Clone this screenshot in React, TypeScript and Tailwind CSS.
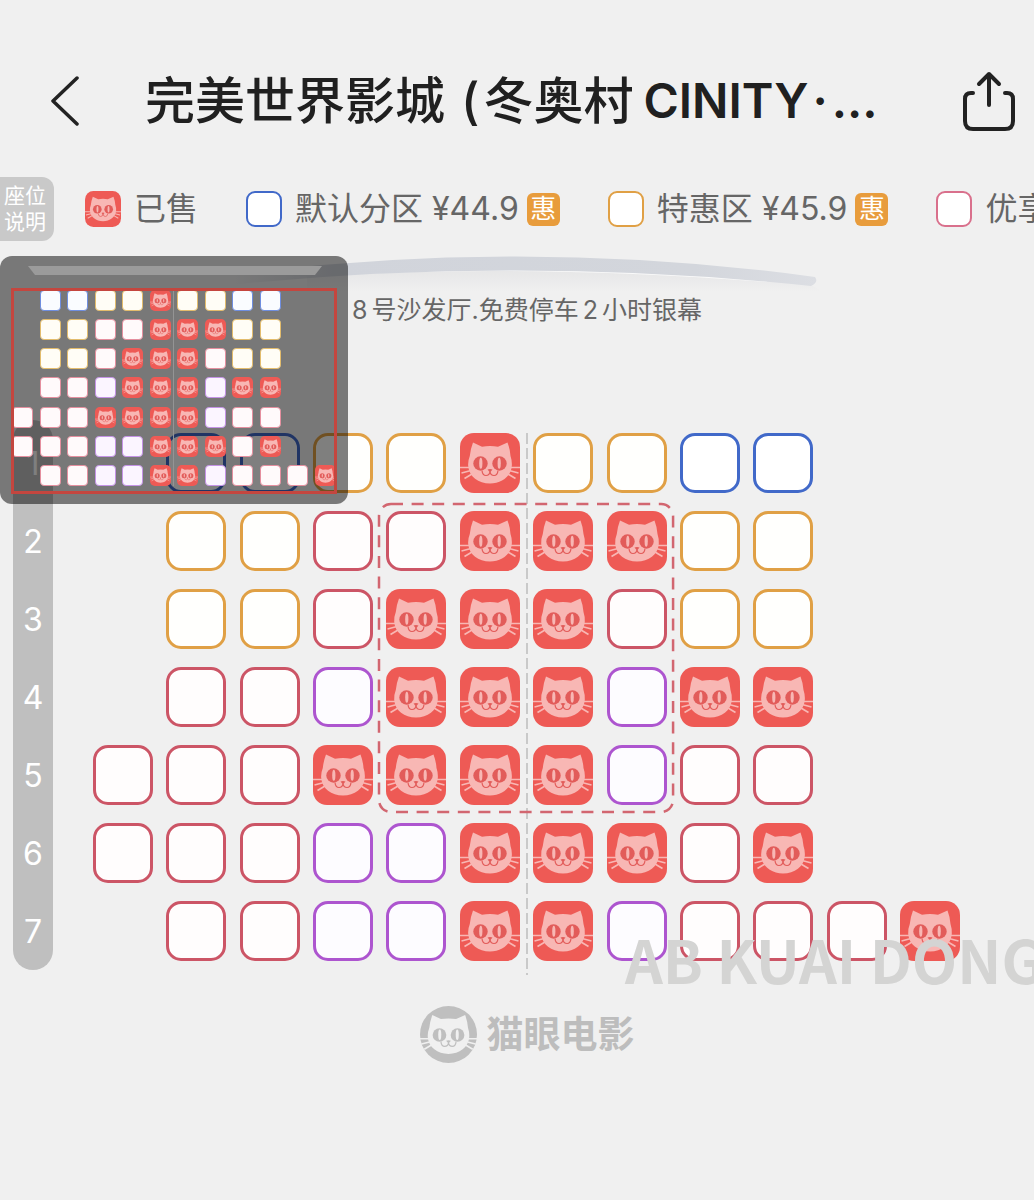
import type { ReactNode } from 'react';

type Kind = 'b' | 'o' | 'r' | 'p' | 'x';

// one string per row: b/o/r/p are price zones, x is sold, . is an empty spot
const ROWS = [
  '.bbooxoobb..',
  '.oorrxxxoo..',
  '.oorxxxroo..',
  '.rrpxxxpxx..',
  'rrrxxxxprr..',
  'rrrppxxxrx..',
  '.rrppxxprrrx',
];

const SEAT_STYLES: Record<Kind, string> = {
  b: 'border-[#4169c9] bg-white',
  o: 'border-[#e0a045] bg-[#fffffd]',
  r: 'border-[#cc5566] bg-[#fffdfd]',
  p: 'border-[#ad55cf] bg-[#fdfcff]',
  x: 'border-transparent',
};

const MINI_STYLES: Record<Kind, string> = {
  b: 'border-[#6f8ee0] bg-[#fafcff]',
  o: 'border-[#e3bc6c] bg-[#fffdf6]',
  r: 'border-[#e58f9f] bg-[#fffafb]',
  p: 'border-[#c493e6] bg-[#fbf5ff]',
  x: 'border-transparent',
};

const COLS = [
  'col-start-1',
  'col-start-2',
  'col-start-3',
  'col-start-4',
  'col-start-5',
  'col-start-6',
  'col-start-7',
  'col-start-8',
  'col-start-9',
  'col-start-10',
  'col-start-11',
  'col-start-12',
];

const LINES = [
  'row-start-1',
  'row-start-2',
  'row-start-3',
  'row-start-4',
  'row-start-5',
  'row-start-6',
  'row-start-7',
];

const SEATS = ROWS.flatMap((row, r) =>
  row
    .split('')
    .map((kind, c) => ({ kind, r, c }))
    .filter((seat) => seat.kind !== '.'),
) as { kind: Kind; r: number; c: number }[];

interface CatFaceProps {
  face: string;
  eye: string;
}

function CatFace({ face, eye }: CatFaceProps) {
  return (
    <>
      <path
        d="M13 9.5 L22 13.8 Q30 12.4 38 13.8 L47.5 9.5 Q50 16 50.5 23 Q52.2 28 51.8 33 C51 43.5 41.5 50.5 30 50.5 C18.5 50.5 9 43.5 8.2 33 Q7.8 28 9.8 23 Q10.5 16 13 9.5 Z"
        fill={face}
      />
      <g stroke={face} strokeWidth="1.7" fill="none">
        <path d="M0 34.5 H10 M1.5 40 L10 37.8 M4.5 45.5 L12 41 M60 34.5 H50 M58.5 40 L50 37.8 M55.5 45.5 L48 41" />
      </g>
      <circle cx="20.5" cy="30.5" r="7.2" fill={eye} />
      <circle cx="39.5" cy="30.5" r="7.2" fill={eye} />
      <ellipse cx="20.8" cy="30.3" rx="1.6" ry="5.5" fill={face} />
      <ellipse cx="39.2" cy="30.3" rx="1.6" ry="5.5" fill={face} />
      <path d="M27.5 36.5 Q30 35.5 32.5 36.5 L30 39.5 Z" fill={eye} />
      <path
        d="M22 37.5 Q22.5 42.5 26 42.5 Q29.5 42.5 30 38.5 Q30.5 42.5 34 42.5 Q37.5 42.5 38 37.5"
        fill="none"
        stroke={eye}
        strokeWidth="1.2"
      />
    </>
  );
}

function SoldIcon({ className }: { className: string }) {
  return (
    <svg viewBox="0 0 60 60" className={className} aria-hidden="true">
      <rect width="60" height="60" rx="14" fill="#ee5a55" />
      <CatFace face="#f8b7b4" eye="#e25c5a" />
    </svg>
  );
}

interface LegendItemProps {
  icon: ReactNode;
  discount?: boolean;
  children: ReactNode;
}

function LegendItem({ icon, discount, children }: LegendItemProps) {
  return (
    <li className="flex shrink-0 items-center">
      {icon}
      <span className="ml-[13px] text-[32px] leading-9 text-[#666]">{children}</span>
      {discount && (
        <span className="ml-2 flex size-[33px] items-center justify-center rounded-md bg-[#e89c3c] text-[26px] leading-8 text-white">
          惠
        </span>
      )}
    </li>
  );
}

function Header() {
  return (
    <header className="flex items-center px-[18px] pt-[66px]">
      <button type="button" aria-label="返回" className="flex h-[70px] w-16 shrink-0 items-center justify-center pl-[30px]">
        <svg viewBox="0 0 30 50" className="h-[50px] w-[30px]" fill="none" stroke="#222" strokeWidth="3.5" strokeLinecap="round" strokeLinejoin="round">
          <path d="M27 2 L3 25 L27 48" />
        </svg>
      </button>
      <h1 className="ml-[63px] flex min-w-0 flex-1 items-center text-[50px] leading-[70px] font-medium whitespace-nowrap text-[#202020]">
        <span>完美世界影城</span>
        <span className="ml-4">(</span>
        <span className="ml-1">冬奥村</span>
        <span className="ml-2.5 text-5xl leading-[70px] font-semibold">CINITY</span>
        <span className="ml-1 text-5xl leading-[70px] font-semibold">·</span>
        <span className="ml-1 text-5xl leading-[70px] font-semibold">...</span>
      </h1>
      <button type="button" aria-label="分享" className="shrink-0">
        <svg viewBox="0 0 54 60" className="h-[60px] w-[54px]" fill="none" stroke="#222" strokeWidth="4" strokeLinecap="round" strokeLinejoin="round">
          <path d="M11 22 H9 Q3 22 3 28 V50 Q3 58 11 58 H43 Q51 58 51 50 V28 Q51 22 45 22 H43" />
          <path d="M27 34 V3 M17 13 L27 3 L37 13" />
        </svg>
      </button>
    </header>
  );
}

function Legend() {
  return (
    <section className="flex items-center overflow-hidden pt-[41px]">
      <p className="w-[54px] shrink-0 rounded-r-xl bg-[#c9c9c9] py-1.5 pl-1 text-[21px] leading-[26px] text-white">
        座位
        <br />
        说明
      </p>
      <ul className="ml-[31px] flex items-center gap-12 whitespace-nowrap">
        <LegendItem icon={<SoldIcon className="size-9" />}>已售</LegendItem>
        <LegendItem icon={<span className="size-9 rounded-[9px] border-2 border-[#4169c9] bg-white" />} discount>
          默认分区 ¥44.9
        </LegendItem>
        <LegendItem icon={<span className="size-9 rounded-[9px] border-2 border-[#e0a045] bg-white" />} discount>
          特惠区 ¥45.9
        </LegendItem>
        <LegendItem icon={<span className="size-9 rounded-[9px] border-2 border-[#d9708c] bg-white" />}>
          优享
        </LegendItem>
      </ul>
    </section>
  );
}

function MiniMap() {
  return (
    <aside className="absolute top-[15px] left-0 h-[248px] w-[348px] rounded-xl bg-black/50 px-[11px] pt-2.5">
      <svg viewBox="0 0 294 9" className="ml-[17px] h-[9px] w-[294px]" aria-hidden="true">
        <path d="M0 0 H294 L287 9 H7 Z" fill="#9b9b9b" />
      </svg>
      <div className="mt-[13px] h-[206px] overflow-hidden border-[3px] border-[#c4463f]">
        <div className="-mr-0.5 -ml-0.5 grid h-[196px] -mt-px grid-cols-[repeat(12,21px)] grid-rows-[repeat(7,21px)] place-content-between">
          {SEATS.map(({ kind, r, c }) =>
            kind === 'x' ? (
              <SoldIcon key={`${r}-${c}`} className={`size-[21px] ${COLS[c]} ${LINES[r]}`} />
            ) : (
              <span
                key={`${r}-${c}`}
                className={`size-[21px] rounded-[4px] border ${MINI_STYLES[kind]} ${COLS[c]} ${LINES[r]}`}
              />
            ),
          )}
          <span className="col-start-7 row-span-7 row-start-1 -ml-1 w-px bg-[#949494]" />
        </div>
      </div>
    </aside>
  );
}

function SeatMap() {
  return (
    <div className="flex pt-[92px] pr-[74px] pl-[13px]">
      <ol className="mr-10 flex w-10 shrink-0 flex-col gap-[18px] rounded-full bg-[#bfbfbf] pt-3.5 pb-2 text-center text-[32px] leading-[60px] text-white">
        {ROWS.map((row, r) => (
          <li key={row}>{r + 1}</li>
        ))}
      </ol>
      <div className="mt-[13px] grid flex-1 grid-cols-[repeat(12,60px)] grid-rows-[repeat(7,60px)] content-start justify-between gap-y-[18px]">
        {SEATS.map(({ kind, r, c }) => (
          <button
            key={`${r}-${c}`}
            type="button"
            disabled={kind === 'x'}
            aria-label={`${r + 1}排${c + 1}座`}
            className={`size-[60px] rounded-[15px] ${kind === 'x' ? '' : 'border-[3px]'} ${SEAT_STYLES[kind]} ${COLS[c]} ${LINES[r]}`}
          >
            {kind === 'x' && <SoldIcon className="size-[60px]" />}
          </button>
        ))}
        <svg className="pointer-events-none col-start-7 row-span-7 row-start-1 -mb-3.5 -ml-[7px] h-[542px] w-0.5" aria-hidden="true">
          <line x1="1" y1="0" x2="1" y2="100%" stroke="#bcbcbc" strokeWidth="1.5" strokeDasharray="11 4" />
        </svg>
        <div className="pointer-events-none col-span-4 col-start-5 row-span-4 row-start-2 -m-[7px]">
          <svg className="h-full w-full overflow-visible" aria-hidden="true">
            <rect width="100%" height="100%" rx="12" fill="none" stroke="#d26670" strokeWidth="2.5" strokeDasharray="12 8.6" />
          </svg>
        </div>
      </div>
    </div>
  );
}

export default function App() {
  return (
    <div className="relative min-h-screen overflow-hidden bg-[#f0f0f0] font-['Inter','Noto_Sans_CJK_SC',sans-serif]">
      <Header />
      <Legend />
      <main className="relative">
        <div className="flex flex-col items-center pt-[15px]">
          <svg viewBox="0 0 620 36" className="h-9 w-[620px]" aria-hidden="true">
            <defs>
              <linearGradient id="glow" x1="0" y1="0" x2="0" y2="1">
                <stop offset="0" stopColor="#e6e6e7" />
                <stop offset="1" stopColor="#f0f0f0" />
              </linearGradient>
              <linearGradient id="screen" x1="0" y1="0" x2="1" y2="0">
                <stop offset="0.04" stopColor="#d1d4db" stopOpacity="0" />
                <stop offset="0.2" stopColor="#d1d4db" />
                <stop offset="0.8" stopColor="#d3d6dc" />
                <stop offset="1" stopColor="#dcdee3" />
              </linearGradient>
            </defs>
            <path d="M100 20 Q310 4 604 29 L616 36 H100 Z" fill="url(#glow)" />
            <path d="M150 17 Q340 8 560 25" fill="none" stroke="#fafafa" strokeWidth="2" />
            <path d="M6 21 Q310 -20 608 21 Q612 26 604 30 Q310 -1 10 30 Q2 26 6 21 Z" fill="url(#screen)" />
          </svg>
          <p className="ml-5 flex text-[25px] leading-9 text-[#666]">
            <span>8</span>
            <span className="ml-1">号沙发厅.免费停车</span>
            <span className="mx-1">2</span>
            <span>小时银幕</span>
          </p>
        </div>
        <SeatMap />
        <MiniMap />
        <p className="pointer-events-none absolute top-[673px] left-[625px] font-['Noto_Sans_CJK_SC',sans-serif] text-[59px] leading-[90px] font-bold whitespace-nowrap text-[#d4d4d3]">
          AB KUAI DONG
        </p>
      </main>
      <footer className="flex items-center justify-center pt-9 pl-5">
        <svg viewBox="0 0 60 60" className="size-[57px]" aria-hidden="true">
          <circle cx="30" cy="30" r="30" fill="#bfbfbf" />
          <CatFace face="#f0f0f0" eye="#bfbfbf" />
        </svg>
        <span className="ml-2.5 text-[37px] leading-[57px] font-bold text-[#bdbdbd]">猫眼电影</span>
      </footer>
    </div>
  );
}
